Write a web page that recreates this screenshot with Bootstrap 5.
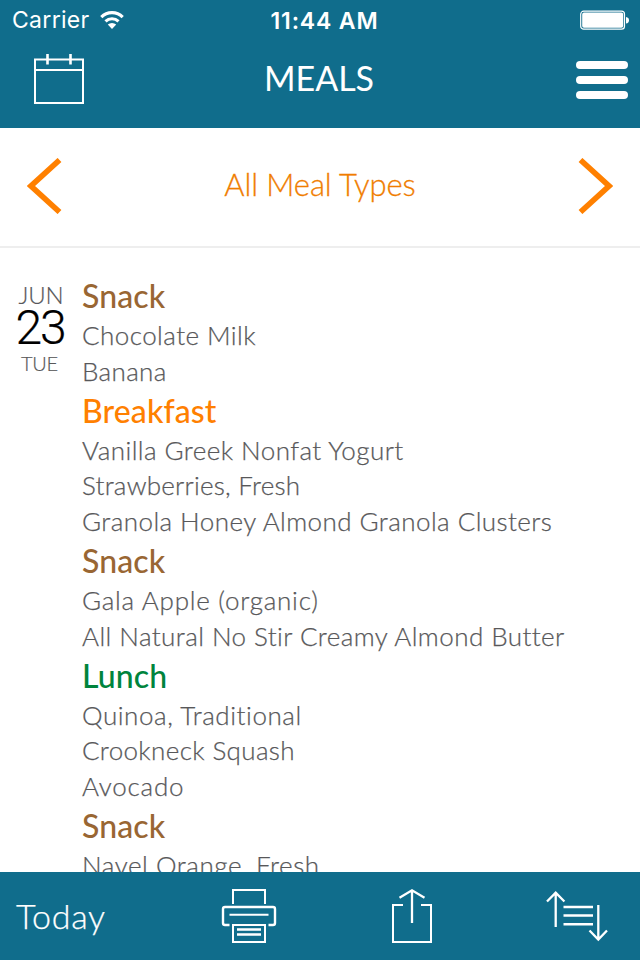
<!DOCTYPE html>
<html lang="en">
<head>
<meta charset="utf-8">
<meta name="viewport" content="width=device-width, initial-scale=1">
<title>Meals</title>
<link href="https://cdn.jsdelivr.net/npm/bootstrap@5.3.0/dist/css/bootstrap.min.css" rel="stylesheet">
<style>
body{font-family:Lato,"Open Sans",sans-serif;font-variant-ligatures:none;color:#58585a}
.teal{background:#106d8c;color:#fff}
.statusbar{height:40px;font:400 23px/40px Inter,sans-serif;padding:0 11px 0 12px}
.carrier{letter-spacing:.3px}
.clock{font-weight:600;letter-spacing:.85px;margin:1px -4px 0 4px}
.side{flex:1 1 0}
.titlebar{height:88px;padding:0 12px 0 34px}
.title{font-size:34px;line-height:40px;font-weight:400;margin:18px 12px 0 -12px}
.plain{background:none;border:0;padding:0;color:inherit;display:block;line-height:0}
.cal{margin-top:13px}
.bars{margin-top:20px}
.filter{height:120px;border-bottom:2px solid #eee;color:#ff8000;padding:0 27px 2px;flex:none}
.filter .kind{font-size:31px;font-weight:300;line-height:40px;letter-spacing:-.1px;color:#f07d00;-webkit-text-stroke:.3px;padding-bottom:4px}
.date{width:82px;flex:none;padding-top:32px;-webkit-text-stroke:.2px}
.mon{font-size:24px;font-weight:300;line-height:30px;letter-spacing:-.2px}
.day{font-family:Roboto,sans-serif;font-size:48px;font-weight:300;line-height:36px;letter-spacing:-2px;color:#000;padding-right:2px}
.dow{font-size:20px;font-weight:300;line-height:34px;letter-spacing:-.3px;padding-right:3px}
.meals{padding-top:26px}
.meals h2{font-size:32px;font-weight:500;line-height:44.2px;margin:0;white-space:nowrap;letter-spacing:.1px}
.meals li{font-size:26px;font-weight:300;line-height:35.33px;white-space:nowrap;letter-spacing:.44px;-webkit-text-stroke:.25px}
.snack{color:#996633}.breakfast{color:#ff8000}.lunch{color:#00843d}
.meals .s2{letter-spacing:.24px}.meals .s3{letter-spacing:.36px}.meals .s5{letter-spacing:.56px}.meals .s7{letter-spacing:.75px}
.toolbar{height:88px;flex:none}
.today{font-size:34px;font-weight:300;letter-spacing:.66px;line-height:40px;width:206px;padding-left:16px;-webkit-text-stroke:.25px}
</style>
<script src="https://cdn.jsdelivr.net/npm/bootstrap@5.3.0/dist/js/bootstrap.bundle.min.js"></script>
</head>
<body class="vh-100 d-flex flex-column overflow-hidden bg-white">
<header class="teal flex-shrink-0">
  <div class="statusbar d-flex align-items-center">
    <div class="side d-flex align-items-center"><span class="carrier">Carrier</span>
      <svg class="ms-2" width="28" height="20" viewBox="0 0 28 20" fill="none" stroke="#fff" stroke-width="3.1"><path d="M3.3 7.1A15 15 0 0 1 24.7 7.1M7.5 11.4A9.4 9.4 0 0 1 20.5 11.4"/><path d="M14 19l-4.2-4.4a6 6 0 0 1 8.4 0z" fill="#fff" stroke="none"/></svg>
    </div>
    <span class="clock">11:44 AM</span>
    <div class="side d-flex justify-content-end">
      <svg width="49" height="20" viewBox="0 0 49 20"><rect x=".7" y="1.2" width="43.8" height="18" rx="3" fill="none" stroke="#fff" stroke-width="1.2"/><rect x="2.2" y="2.6" width="41" height="15.2" rx="1.8" fill="#fff"/><path d="M46 7c2 .3 3 1.5 3 3.300s-1 3-3 3.300z" fill="#fff"/></svg>
    </div>
  </div>
  <nav class="titlebar d-flex align-items-start">
    <div class="side"><button class="plain cal" aria-label="Calendar"><svg width="50" height="51" viewBox="0 0 50 51" fill="none" stroke="#fff" stroke-width="2"><path d="M1 6.500H49V50H1zM1 17H49"/><path d="M13.500 1V11.500M36.500 1V11.500" stroke-width="2.600"/></svg></button></div>
    <h1 class="title">MEALS</h1>
    <div class="side d-flex justify-content-end"><button class="plain bars" aria-label="Menu"><svg width="52" height="40" viewBox="0 0 52 40" fill="#fff"><rect y="1" width="52" height="8" rx="4"/><rect y="16" width="52" height="8" rx="4"/><rect y="31" width="52" height="8" rx="4"/></svg></button></div>
  </nav>
</header>
<section class="filter d-flex align-items-center justify-content-between">
  <button class="plain" aria-label="Previous"><svg width="35" height="56" viewBox="0 0 35 56" fill="none" stroke="#ff8000" stroke-width="5.600"><path d="M32.500 2L4 28L32.500 54"/></svg></button>
  <span class="kind">All Meal Types</span>
  <button class="plain" aria-label="Next"><svg width="35" height="56" viewBox="0 0 35 56" fill="none" stroke="#ff8000" stroke-width="5.600"><path d="M2.500 2L31 28L2.500 54"/></svg></button>
</section>
<main class="d-flex flex-grow-1 overflow-hidden">
  <div class="date text-center">
    <div class="mon">JUN</div><div class="day">23</div><div class="dow">TUE</div>
  </div>
  <div class="meals">
    <h2 class="snack">Snack</h2>
    <ul class="list-unstyled m-0"><li>Chocolate Milk</li><li class="s3">Banana</li></ul>
    <h2 class="breakfast">Breakfast</h2>
    <ul class="list-unstyled m-0"><li>Vanilla Greek Nonfat Yogurt</li><li class="s2">Strawberries, Fresh</li><li>Granola Honey Almond Granola Clusters</li></ul>
    <h2 class="snack">Snack</h2>
    <ul class="list-unstyled m-0"><li class="s7">Gala Apple (organic)</li><li>All Natural No Stir Creamy Almond Butter</li></ul>
    <h2 class="lunch">Lunch</h2>
    <ul class="list-unstyled m-0"><li class="s5">Quinoa, Traditional</li><li class="s3">Crookneck Squash</li><li class="s7">Avocado</li></ul>
    <h2 class="snack">Snack</h2>
    <ul class="list-unstyled m-0"><li class="s5">Navel Orange, Fresh</li></ul>
  </div>
</main>
<footer class="toolbar teal d-flex align-items-center">
  <div class="flex-grow-1 d-flex align-items-center">
    <button class="plain today text-start">Today</button>
    <button class="plain" aria-label="Print"><svg width="86" height="56" viewBox="206 888 86 56" fill="none" stroke="#fff" stroke-width="2"><path d="M233 904V890H265V904"/><path d="M229.500 925H225q-2 0-2-2V909q0-2 2-2H273q2 0 2 2V923q0 2-2 2H268.500" stroke-width="2.400"/><path d="M229.500 914.700H268.500"/><path d="M233 925H265V942H233z"/><path d="M237 929.500H261M237 934.500H261" stroke-width="2.400"/></svg></button>
    <button class="plain" aria-label="Share"><svg width="168" height="56" viewBox="292 888 168 56" fill="none" stroke="#fff" stroke-width="2"><path d="M403 905H393V942H431V905H421"/><path d="M412 923V890M399.500 897.700L412 890.300L424.500 897.700" stroke-width="2.300"/></svg></button>
    <button class="plain" aria-label="Sort"><svg width="180" height="56" viewBox="460 888 180 56" fill="none" stroke="#fff" stroke-width="2.300"><path d="M555.700 927V892M547 901.500L555.700 892.700L564.400 901.500M598.300 905V940M589.500 930.500L598.300 939.500L607 930.500"/><path d="M563.500 907H593M563.500 915.500H593M563.500 924.200H593" stroke-width="2.500"/></svg></button>
  </div>
</footer>
</body>
</html>
